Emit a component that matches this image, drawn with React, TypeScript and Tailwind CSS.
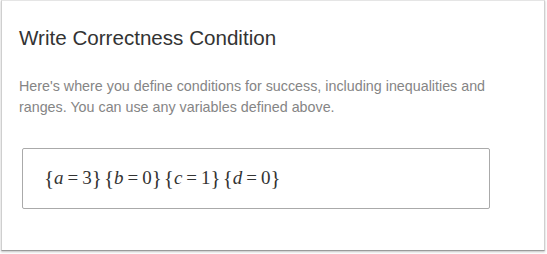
export default function App() {
  const conds: [string, string][] = [
    ["a", "3"],
    ["b", "0"],
    ["c", "1"],
    ["d", "0"],
  ];

  return (
    <div className="h-[254px] w-[547px] bg-white">
      <div className="ml-[1px] h-[251px] w-[544px] border border-t-[#e5e5e5] border-x-[#cfcfcf] border-b-[#9a9a9a] bg-white px-[17px] pt-[21px] shadow-[0_1px_2px_rgba(0,0,0,0.25)]">
        <h2 className="font-['Liberation_Sans',Arial,sans-serif] text-[20.6px] leading-[32px] text-[#333]">
          Write Correctness Condition
        </h2>
        <p className="mt-[22px] w-[480px] font-['Liberation_Sans',Arial,sans-serif] text-[14.3px] leading-[21px] text-[#858585]">
          Here's where you define conditions for success, including inequalities and ranges. You can use any
          variables defined above.
        </p>
        <div className="mt-[30px] ml-[3px] flex h-[61px] w-[468px] items-center rounded-[2px] border border-[#aaa] pl-[21px]">
          <div className="flex items-center font-['Liberation_Serif','Times_New_Roman',serif] text-[19px] text-[#333]">
            {conds.map(([v, n]) => (
              <span key={v} className="flex items-center">
                <span className="text-[21px]">{"{"}</span>
                <span className="italic">{v}</span>
                <span className="mx-[4px]">=</span>
                <span>{n}</span>
                <span className="mr-[2px] text-[21px]">{"}"}</span>
              </span>
            ))}
          </div>
        </div>
      </div>
    </div>
  );
}
